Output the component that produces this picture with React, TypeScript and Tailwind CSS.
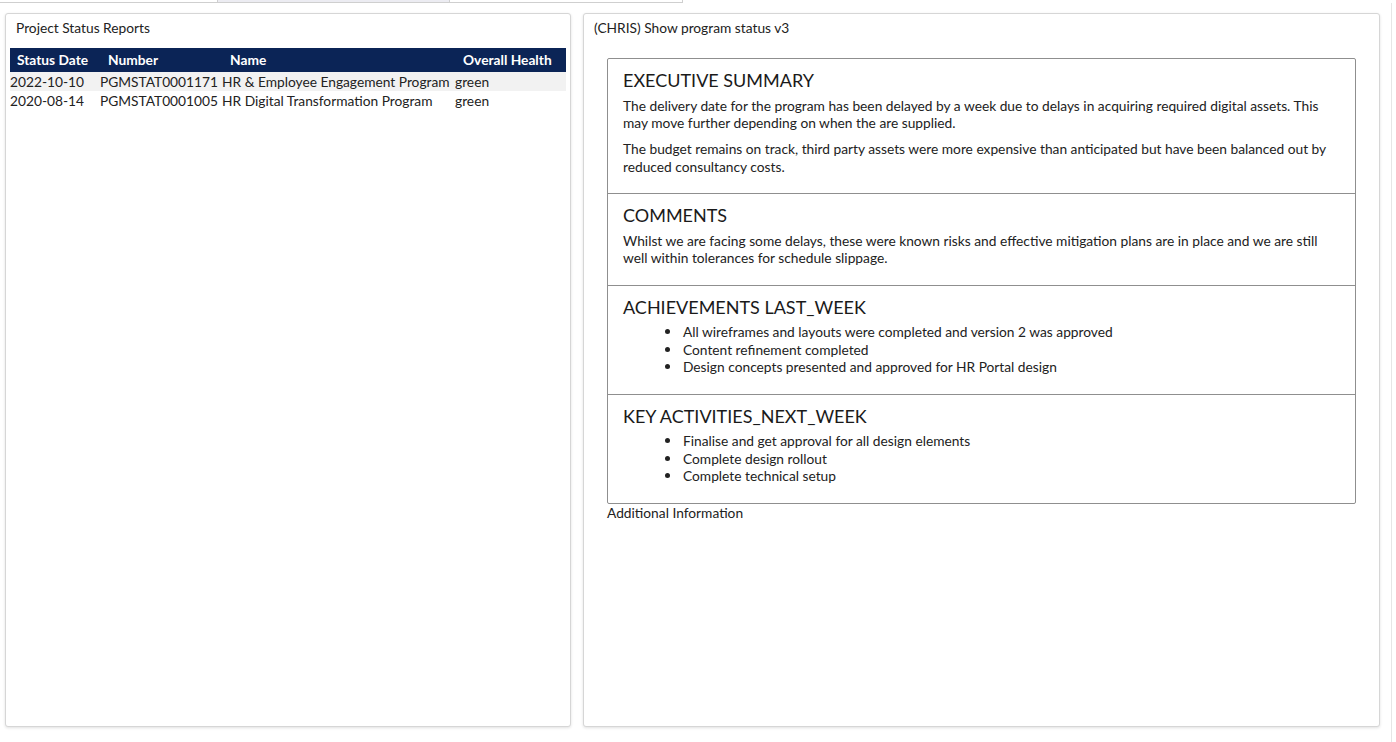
import React from 'react';

type Row = { date: string; number: string; name: string; health: string };

const ROWS: Row[] = [
  { date: '2022-10-10', number: 'PGMSTAT0001171', name: 'HR & Employee Engagement Program', health: 'green' },
  { date: '2020-08-14', number: 'PGMSTAT0001005', name: 'HR Digital Transformation Program', health: 'green' },
];

const Section: React.FC<{ title: string; last?: boolean; children: React.ReactNode }> = ({ title, last, children }) => (
  <div className={`px-[15px] pt-[10px] pb-[18px] ${last ? '' : 'border-b border-[#8f8f8f]'}`}>
    <h3 className="text-[18px] leading-[23px] text-[#1a1a1a] mb-[4.5px]">{title}</h3>
    {children}
  </div>
);

const Bullets: React.FC<{ items: string[] }> = ({ items }) => (
  <ul className="pl-[42px] text-[13.75px] leading-[17.5px] text-[#222]">
    {items.map((it, i) => (
      <li key={i} className="flex items-center">
        <span className="w-[5px] h-[5px] rounded-full bg-[#222] shrink-0" />
        <span className="ml-[13px]">{it}</span>
      </li>
    ))}
  </ul>
);

const App: React.FC = () => {
  return (
    <div className="w-[1396px] h-[742px] bg-white font-['Lato',sans-serif] text-[#222] flex flex-col overflow-hidden">
      {/* cut-off tab strip */}
      <div className="flex h-[3px] w-[683px]">
        <div className="w-[217px] border-b border-[#cfcfcf]" />
        <div className="w-[233px] bg-[#ececf2] border-x border-b border-[#cfcfcf]" />
        <div className="flex-1 border-b border-r border-[#cfcfcf]" />
      </div>

      <div className="flex flex-1 pt-[10px] pb-[15px] pl-[5px]">
        {/* left panel */}
        <div className="w-[566px] bg-white border border-[#d6d6d6] rounded-[3px] shadow-[0_1px_3px_rgba(0,0,0,0.12)] px-[4px] flex flex-col">
          <div className="pl-[6px] pt-[5px] text-[13.75px] leading-[18px] text-[#222]">Project Status Reports</div>
          <div className="mt-[11px] text-[13.75px]">
            <div className="grid grid-cols-[90px_122px_233px_1fr] bg-[#0b2456] text-white font-bold h-[24px] items-center">
              <div className="pl-[7px]">Status Date</div>
              <div className="pl-[8px]">Number</div>
              <div className="pl-[8px]">Name</div>
              <div className="pl-[8px]">Overall Health</div>
            </div>
            {ROWS.map((r, i) => (
              <div
                key={r.number}
                className={`grid grid-cols-[90px_122px_233px_1fr] h-[19px] items-center leading-[18px] whitespace-nowrap ${i === 0 ? 'bg-[#f2f2f2]' : ''}`}
              >
                <div>{r.date}</div>
                <div>{r.number}</div>
                <div>{r.name}</div>
                <div>{r.health}</div>
              </div>
            ))}
          </div>
        </div>

        {/* right panel */}
        <div className="ml-[12px] w-[797px] bg-white border border-[#d6d6d6] rounded-[3px] shadow-[0_1px_3px_rgba(0,0,0,0.12)] flex flex-col">
          <div className="pl-[10px] pt-[5px] text-[13.75px] leading-[18px] text-[#222]">(CHRIS) Show program status v3</div>
          <div className="ml-[23px] mr-[23px] mt-[21px] border border-[#8f8f8f] rounded-[2px]">
            <Section title="EXECUTIVE SUMMARY">
              <div className="text-[13.75px] leading-[17.5px] text-[#222] pr-[10px]">
                <p className="mb-[8.5px]">
                  The delivery date for the program has been delayed by a week due to delays in acquiring required digital assets. This may move further depending on when the are supplied.
                </p>
                <p>
                  The budget remains on track, third party assets were more expensive than anticipated but have been balanced out by reduced consultancy costs.
                </p>
              </div>
            </Section>
            <Section title="COMMENTS">
              <p className="text-[13.75px] leading-[17.5px] text-[#222] pr-[10px]">
                Whilst we are facing some delays, these were known risks and effective mitigation plans are in place and we are still well within tolerances for schedule slippage.
              </p>
            </Section>
            <Section title="ACHIEVEMENTS LAST_WEEK">
              <Bullets
                items={[
                  'All wireframes and layouts were completed and version 2 was approved',
                  'Content refinement completed',
                  'Design concepts presented and approved for HR Portal design',
                ]}
              />
            </Section>
            <Section title="KEY ACTIVITIES_NEXT_WEEK" last>
              <Bullets
                items={[
                  'Finalise and get approval for all design elements',
                  'Complete design rollout',
                  'Complete technical setup',
                ]}
              />
            </Section>
          </div>
          <div className="ml-[23px] text-[13.75px] leading-[17px] text-[#222]">Additional Information</div>
        </div>

        <div className="ml-[11px] w-[1px] bg-[#e6e6e6] -mt-[10px] -mb-[15px]" />
      </div>
    </div>
  );
};

export default App;
